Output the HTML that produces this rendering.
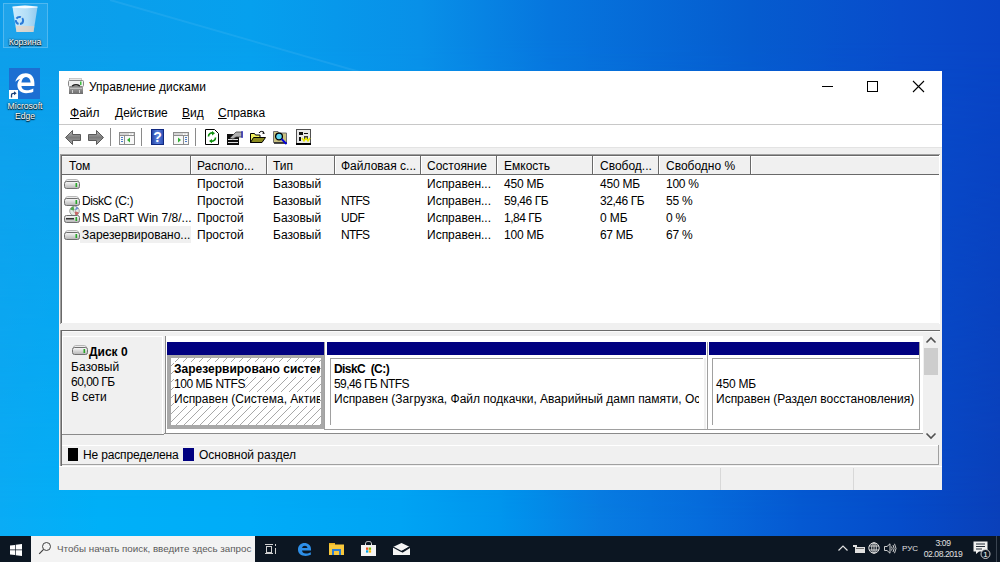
<!DOCTYPE html>
<html><head><meta charset="utf-8">
<style>
*{box-sizing:border-box;margin:0;padding:0}
html,body{width:1000px;height:562px;overflow:hidden}
body{position:relative;font-family:"Liberation Sans",sans-serif;font-size:12px;color:#000;
background:linear-gradient(90deg,#0aacf5 0px,#00b0f8 100px,#00acf8 250px,#00a4f4 400px,#0096ee 500px,#087ce2 600px,#066cdc 700px,#0559d2 800px,#054cca 900px,#0a40ba 1000px)}
#bgtop{position:absolute;left:0;top:0;width:1000px;height:562px;background:linear-gradient(90deg,#0e9eea 0px,#06a0ee 250px,#0890e8 420px,#0676de 550px,#055ccf 750px,#084ccb 900px,#0844c6 1000px);-webkit-mask-image:linear-gradient(to bottom,#000 0px,#000 40px,transparent 520px);mask-image:linear-gradient(to bottom,#000 0px,#000 40px,transparent 520px)}
.a{position:absolute}
.t{position:absolute;white-space:nowrap;line-height:15px;font-size:12px;height:15px}
.b{font-weight:bold}
svg{position:absolute;overflow:visible}
</style></head><body>

<div id="bgtop"></div>
<svg style="left:0;top:0" width="1000" height="72"><path d="M110 0L360 72" stroke="rgba(255,255,255,0.07)" stroke-width="2"/></svg>
<div class="a" style="left:3px;top:3px;width:45px;height:45px;background:rgba(255,255,255,0.07);border:1px solid rgba(255,255,255,0.22)"></div>
<div class="a" style="left:59px;top:71px;width:883px;height:419px;background:#fff;"></div>
<div class="t " style="left:89px;top:80px;">Управление дисками</div>
<div class="a" style="left:822px;top:86px;width:11px;height:1px;background:#000;"></div>
<div class="a" style="left:867px;top:81px;width:11px;height:11px;background:transparent;border:1px solid #000"></div>
<svg style="left:913px;top:81px" width="11" height="11"><path d="M0 0L11 11M11 0L0 11" stroke="#000" stroke-width="1.1"/></svg>
<div class="t " style="left:70px;top:106px;"><u>Ф</u>айл</div>
<div class="t " style="left:115px;top:106px;"><u>Д</u>ействие</div>
<div class="t " style="left:182px;top:106px;"><u>В</u>ид</div>
<div class="t " style="left:218px;top:106px;"><u>С</u>правка</div>
<div class="a" style="left:59px;top:124px;width:883px;height:1px;background:#c8c8c8;"></div>
<div class="a" style="left:59px;top:147px;width:883px;height:343px;background:#f0f0f0;"></div>
<div class="a" style="left:60px;top:154px;width:880px;height:170px;background:#fff;"></div>
<div class="a" style="left:60px;top:154px;width:880px;height:1px;background:#a0a0a0;"></div>
<div class="a" style="left:60px;top:154px;width:1px;height:170px;background:#a0a0a0;"></div>
<div class="a" style="left:61px;top:155px;width:878px;height:1px;background:#696969;"></div>
<div class="a" style="left:61px;top:155px;width:1px;height:168px;background:#696969;"></div>
<div class="a" style="left:62px;top:156px;width:877px;height:18px;background:#f0f0f0;"></div>
<div class="a" style="left:62px;top:156px;width:877px;height:1px;background:#fff;"></div>
<div class="a" style="left:62px;top:174px;width:877px;height:1px;background:#696969;"></div>
<div class="a" style="left:190px;top:156px;width:1px;height:18px;background:#696969;"></div>
<div class="a" style="left:191px;top:157px;width:1px;height:17px;background:#fff;"></div>
<div class="a" style="left:266px;top:156px;width:1px;height:18px;background:#696969;"></div>
<div class="a" style="left:267px;top:157px;width:1px;height:17px;background:#fff;"></div>
<div class="a" style="left:334px;top:156px;width:1px;height:18px;background:#696969;"></div>
<div class="a" style="left:335px;top:157px;width:1px;height:17px;background:#fff;"></div>
<div class="a" style="left:420px;top:156px;width:1px;height:18px;background:#696969;"></div>
<div class="a" style="left:421px;top:157px;width:1px;height:17px;background:#fff;"></div>
<div class="a" style="left:496px;top:156px;width:1px;height:18px;background:#696969;"></div>
<div class="a" style="left:497px;top:157px;width:1px;height:17px;background:#fff;"></div>
<div class="a" style="left:592px;top:156px;width:1px;height:18px;background:#696969;"></div>
<div class="a" style="left:593px;top:157px;width:1px;height:17px;background:#fff;"></div>
<div class="a" style="left:658px;top:156px;width:1px;height:18px;background:#696969;"></div>
<div class="a" style="left:659px;top:157px;width:1px;height:17px;background:#fff;"></div>
<div class="a" style="left:750px;top:156px;width:1px;height:18px;background:#696969;"></div>
<div class="a" style="left:751px;top:157px;width:1px;height:17px;background:#fff;"></div>
<div class="t " style="left:69px;top:159px;">Том</div>
<div class="t " style="left:197px;top:159px;">Располо...</div>
<div class="t " style="left:273px;top:159px;">Тип</div>
<div class="t " style="left:341px;top:159px;">Файловая с...</div>
<div class="t " style="left:427px;top:159px;">Состояние</div>
<div class="t " style="left:504px;top:159px;">Емкость</div>
<div class="t " style="left:600px;top:159px;">Свобод...</div>
<div class="t " style="left:666px;top:159px;">Свободно %</div>
<div class="t " style="left:197px;top:177px;">Простой</div>
<div class="t " style="left:273px;top:177px;">Базовый</div>
<div class="t " style="left:427px;top:177px;">Исправен...</div>
<div class="t " style="left:504px;top:177px;letter-spacing:-0.2px;">450 МБ</div>
<div class="t " style="left:600px;top:177px;letter-spacing:-0.2px;">450 МБ</div>
<div class="t " style="left:666px;top:177px;letter-spacing:-0.25px;">100 %</div>
<svg style="left:64px;top:179px" width="16" height="10"><defs><linearGradient id="gd64179" x1="0" y1="0" x2="0" y2="1"><stop offset="0" stop-color="#fafafa"/><stop offset="1" stop-color="#b4b4b4"/></linearGradient></defs><path d="M3.5 0.5H12.5Q14 0.5 14.8 2.8H1.2Q2 0.5 3.5 0.5Z" fill="#ececec" stroke="#a8a8a8" stroke-width="0.8"/><rect x="0.5" y="2.5" width="15" height="7" rx="2" fill="url(#gd64179)" stroke="#707070"/><rect x="11.5" y="4" width="1.6" height="4" fill="#28a828"/></svg>
<div class="t " style="left:82px;top:194px;letter-spacing:-0.43px;">DiskC (C:)</div>
<div class="t " style="left:197px;top:194px;">Простой</div>
<div class="t " style="left:273px;top:194px;">Базовый</div>
<div class="t " style="left:341px;top:194px;letter-spacing:-0.75px;">NTFS</div>
<div class="t " style="left:427px;top:194px;">Исправен...</div>
<div class="t " style="left:504px;top:194px;letter-spacing:-0.45px;">59,46 ГБ</div>
<div class="t " style="left:600px;top:194px;letter-spacing:-0.45px;">32,46 ГБ</div>
<div class="t " style="left:666px;top:194px;letter-spacing:-0.25px;">55 %</div>
<svg style="left:64px;top:196px" width="16" height="10"><defs><linearGradient id="gd64196" x1="0" y1="0" x2="0" y2="1"><stop offset="0" stop-color="#fafafa"/><stop offset="1" stop-color="#b4b4b4"/></linearGradient></defs><path d="M3.5 0.5H12.5Q14 0.5 14.8 2.8H1.2Q2 0.5 3.5 0.5Z" fill="#ececec" stroke="#a8a8a8" stroke-width="0.8"/><rect x="0.5" y="2.5" width="15" height="7" rx="2" fill="url(#gd64196)" stroke="#707070"/><rect x="11.5" y="4" width="1.6" height="4" fill="#28a828"/></svg>
<div class="t " style="left:82px;top:211px;">MS DaRT Win 7/8/...</div>
<div class="t " style="left:197px;top:211px;">Простой</div>
<div class="t " style="left:273px;top:211px;">Базовый</div>
<div class="t " style="left:341px;top:211px;letter-spacing:-0.45px;">UDF</div>
<div class="t " style="left:427px;top:211px;">Исправен...</div>
<div class="t " style="left:504px;top:211px;letter-spacing:-0.5px;">1,84 ГБ</div>
<div class="t " style="left:600px;top:211px;letter-spacing:-0.1px;">0 МБ</div>
<div class="t " style="left:666px;top:211px;letter-spacing:-0.2px;">0 %</div>
<svg style="left:64px;top:206px" width="16" height="17"><defs><linearGradient id="gd64213" x1="0" y1="0" x2="0" y2="1"><stop offset="0" stop-color="#fafafa"/><stop offset="1" stop-color="#b4b4b4"/></linearGradient></defs><circle cx="10.5" cy="5" r="4.8" fill="#e4ece4" stroke="#909090" stroke-width="0.8"/><path d="M6.2 3.5A4.8 4.8 0 0 1 9.5 0.3L10.5 5Z" fill="#50a850"/><path d="M14.8 6.5A4.8 4.8 0 0 1 11.5 9.7L10.5 5Z" fill="#c86868"/><path d="M14.5 2.5A4.8 4.8 0 0 0 12.5 0.6L10.5 5Z" fill="#7090d0"/><circle cx="10.5" cy="5" r="1.1" fill="#fff" stroke="#888" stroke-width="0.5"/><rect x="0.5" y="9.5" width="15" height="7" rx="2" fill="url(#gd64213)" stroke="#707070"/><rect x="2" y="12" width="8" height="1.5" fill="#303030"/><rect x="11.5" y="11" width="1.6" height="4" fill="#28a828"/></svg>
<div class="a" style="left:80px;top:226px;width:111px;height:17px;background:#f0f0f0;"></div>
<div class="t " style="left:82px;top:228px;">Зарезервировано...</div>
<div class="t " style="left:197px;top:228px;">Простой</div>
<div class="t " style="left:273px;top:228px;">Базовый</div>
<div class="t " style="left:341px;top:228px;letter-spacing:-0.75px;">NTFS</div>
<div class="t " style="left:427px;top:228px;">Исправен...</div>
<div class="t " style="left:504px;top:228px;letter-spacing:-0.2px;">100 МБ</div>
<div class="t " style="left:600px;top:228px;letter-spacing:-0.3px;">67 МБ</div>
<div class="t " style="left:666px;top:228px;letter-spacing:-0.25px;">67 %</div>
<svg style="left:64px;top:230px" width="16" height="10"><defs><linearGradient id="gd64230" x1="0" y1="0" x2="0" y2="1"><stop offset="0" stop-color="#fafafa"/><stop offset="1" stop-color="#b4b4b4"/></linearGradient></defs><path d="M3.5 0.5H12.5Q14 0.5 14.8 2.8H1.2Q2 0.5 3.5 0.5Z" fill="#ececec" stroke="#a8a8a8" stroke-width="0.8"/><rect x="0.5" y="2.5" width="15" height="7" rx="2" fill="url(#gd64230)" stroke="#707070"/><rect x="11.5" y="4" width="1.6" height="4" fill="#28a828"/></svg>
<div class="a" style="left:61px;top:323px;width:878px;height:1px;background:#f0f0f0;"></div>
<div class="a" style="left:60px;top:330px;width:880px;height:1px;background:#6a6a6a;"></div>
<div class="a" style="left:60px;top:331px;width:880px;height:1px;background:#fafafa;"></div>
<div class="a" style="left:60px;top:330px;width:1px;height:136px;background:#a0a0a0;"></div>
<div class="a" style="left:61px;top:330px;width:1px;height:136px;background:#696969;"></div>
<div class="a" style="left:62px;top:336px;width:101px;height:99px;background:#f0f0f0;"></div>
<div class="a" style="left:62px;top:336px;width:101px;height:1px;background:#fff;"></div>
<div class="a" style="left:62px;top:336px;width:1px;height:98px;background:#fff;"></div>
<div class="a" style="left:162px;top:336px;width:1px;height:98px;background:#fff;"></div>
<div class="a" style="left:62px;top:434px;width:102px;height:1px;background:#8a8a8a;"></div>
<div class="t b" style="left:89px;top:345px;">Диск 0</div>
<div class="t " style="left:71px;top:360px;">Базовый</div>
<div class="t " style="left:71px;top:375px;letter-spacing:-0.5px;">60,00 ГБ</div>
<div class="t " style="left:71px;top:390px;">В сети</div>
<svg style="left:72px;top:345px" width="16" height="10"><defs><linearGradient id="gd72345" x1="0" y1="0" x2="0" y2="1"><stop offset="0" stop-color="#fafafa"/><stop offset="1" stop-color="#b4b4b4"/></linearGradient></defs><path d="M3.5 0.5H12.5Q14 0.5 14.8 2.8H1.2Q2 0.5 3.5 0.5Z" fill="#ececec" stroke="#a8a8a8" stroke-width="0.8"/><rect x="0.5" y="2.5" width="15" height="7" rx="2" fill="url(#gd72345)" stroke="#707070"/><rect x="11.5" y="4" width="1.6" height="4" fill="#28a828"/></svg>
<div class="a" style="left:166px;top:336px;width:757px;height:98px;background:#fff;"></div>
<div class="a" style="left:164px;top:433px;width:759px;height:1px;background:#8a8a8a;"></div>
<div class="a" style="left:165px;top:336px;width:1px;height:97px;background:#8a8a8a;"></div>
<div class="a" style="left:167px;top:342px;width:157px;height:13px;background:#000080;"></div>
<div class="a" style="left:327px;top:342px;width:379px;height:13px;background:#000080;"></div>
<div class="a" style="left:709px;top:342px;width:210px;height:13px;background:#000080;"></div>
<div class="a" style="left:324px;top:342px;width:1px;height:88px;background:#a0a0a0;"></div>
<div class="a" style="left:707px;top:342px;width:1px;height:88px;background:#a0a0a0;"></div>
<div class="a" style="left:704px;top:358px;width:2px;height:71px;background:#f0f0f0;"></div>
<div class="a" style="left:919px;top:342px;width:1px;height:88px;background:#a0a0a0;"></div>
<div class="a" style="left:325px;top:429px;width:595px;height:1px;background:#a0a0a0;"></div>
<div class="a" style="left:167px;top:355px;width:157px;height:74px;background:#a8a8a8;"></div>
<svg style="left:171px;top:358px" width="150" height="67"><defs><pattern id="h" width="8" height="8" patternUnits="userSpaceOnUse"><rect width="8" height="8" fill="#fff"/><path d="M-1 9L9 -1" stroke="#a8a8a8" stroke-width="1"/></pattern></defs><rect width="150" height="67" fill="url(#h)"/></svg>
<div class="t b" style="left:174px;top:362px;width:146px;overflow:hidden;background:#fff">Зарезервировано систем</div>
<div class="t " style="left:174px;top:377px;letter-spacing:-0.45px;background:#fff">100 МБ NTFS</div>
<div class="t " style="left:174px;top:392px;width:146px;overflow:hidden;background:#fff;height:14px">Исправен (Система, Активен, Основной раздел)</div>
<div class="a" style="left:330px;top:358px;width:373px;height:67px;background:#fff;border-top:1px solid #a0a0a0;border-left:1px solid #a0a0a0"></div>
<div class="t b" style="left:334px;top:362px;letter-spacing:-0.57px;">DiskC&nbsp;&nbsp;(C:)</div>
<div class="t " style="left:334px;top:377px;letter-spacing:-0.57px;">59,46 ГБ NTFS</div>
<div class="t " style="left:334px;top:392px;width:365px;overflow:hidden">Исправен (Загрузка, Файл подкачки, Аварийный дамп памяти, Основной раздел)</div>
<div class="a" style="left:712px;top:358px;width:207px;height:67px;background:#fff;border-top:1px solid #a0a0a0;border-left:1px solid #a0a0a0"></div>
<div class="t " style="left:716px;top:377px;letter-spacing:-0.2px;">450 МБ</div>
<div class="t " style="left:716px;top:392px;">Исправен (Раздел восстановления)</div>
<div class="a" style="left:923px;top:337px;width:16px;height:108px;background:#f0f0f0;"></div>
<div class="a" style="left:924px;top:348px;width:14px;height:27px;background:#cdcdcd;"></div>
<svg style="left:925px;top:336px" width="12" height="8"><path d="M1.5 6.5L6 2L10.5 6.5" stroke="#505050" stroke-width="1.6" fill="none"/></svg>
<svg style="left:925px;top:432px" width="12" height="8"><path d="M1.5 1.5L6 6L10.5 1.5" stroke="#505050" stroke-width="1.6" fill="none"/></svg>
<div class="a" style="left:62px;top:445px;width:877px;height:1px;background:#fff;"></div>
<div class="a" style="left:62px;top:464px;width:877px;height:1px;background:#a0a0a0;"></div>
<div class="a" style="left:938px;top:445px;width:1px;height:20px;background:#a0a0a0;"></div>
<div class="a" style="left:68px;top:448px;width:10px;height:13px;background:#000;"></div>
<div class="t " style="left:83px;top:448px;letter-spacing:-0.15px">Не распределена</div>
<div class="a" style="left:183px;top:448px;width:11px;height:13px;background:#000080;"></div>
<div class="t " style="left:199px;top:448px;">Основной раздел</div>
<div class="a" style="left:59px;top:466px;width:883px;height:1px;background:#fff;"></div>
<div class="a" style="left:720px;top:468px;width:1px;height:22px;background:#d8d8d8;"></div>
<div class="a" style="left:853px;top:468px;width:1px;height:22px;background:#d8d8d8;"></div>
<svg style="left:64px;top:129px" width="18" height="17"><defs><linearGradient id="ga" x1="0" y1="0" x2="0" y2="1"><stop offset="0" stop-color="#b8b8b8"/><stop offset="0.5" stop-color="#7c7c7c"/><stop offset="1" stop-color="#a8a8a8"/></linearGradient></defs><path d="M1.5 8.5L8.5 1.5V5.5H16.5V11.5H8.5V15.5Z" fill="url(#ga)" stroke="#5a5a5a" stroke-width="1" stroke-linejoin="round"/></svg>
<svg style="left:87px;top:129px" width="18" height="17"><path d="M16.5 8.5L9.5 1.5V5.5H1.5V11.5H9.5V15.5Z" fill="url(#ga)" stroke="#5a5a5a" stroke-width="1" stroke-linejoin="round"/></svg>
<div class="a" style="left:110px;top:128px;width:1px;height:18px;background:#8a8a8a;"></div>
<div class="a" style="left:141px;top:128px;width:1px;height:18px;background:#8a8a8a;"></div>
<div class="a" style="left:195px;top:128px;width:1px;height:18px;background:#8a8a8a;"></div>
<svg style="left:119px;top:132px" width="16" height="13"><rect x="0.5" y="0.5" width="15" height="12" fill="#f8f8f8" stroke="#8c8c8c"/><rect x="1" y="1" width="14" height="2.5" fill="#d4d4d4"/><rect x="10" y="1.5" width="1.5" height="1.5" fill="#fff"/><rect x="12.5" y="1.5" width="1.5" height="1.5" fill="#fff"/><path d="M0.5 3.5H15.5M5.5 3.5V12.5" stroke="#8c8c8c"/><path d="M2 5.5H4M2 7.5H4M2 9.5H4" stroke="#4a7cc8"/><path d="M11 5.5V10.5L8 8Z" fill="#30b030"/></svg>
<svg style="left:151px;top:129px" width="13" height="16"><defs><linearGradient id="gh" x1="0" y1="0" x2="1" y2="0"><stop offset="0" stop-color="#1e3ca0"/><stop offset="0.5" stop-color="#5a82dc"/><stop offset="1" stop-color="#2848b0"/></linearGradient></defs><rect x="0" y="0" width="13" height="16" fill="url(#gh)"/><rect x="0.5" y="0.5" width="12" height="15" fill="none" stroke="#102880"/><text x="6.5" y="13" font-family="Liberation Sans" font-weight="bold" font-size="14" fill="#fff" text-anchor="middle">?</text></svg>
<svg style="left:173px;top:132px" width="16" height="13"><rect x="0.5" y="0.5" width="15" height="12" fill="#f8f8f8" stroke="#8c8c8c"/><rect x="1" y="1" width="14" height="2.5" fill="#d4d4d4"/><rect x="10" y="1.5" width="1.5" height="1.5" fill="#fff"/><rect x="12.5" y="1.5" width="1.5" height="1.5" fill="#fff"/><path d="M0.5 3.5H15.5M10.5 3.5V12.5" stroke="#8c8c8c"/><path d="M12 5.5H14M12 7.5H14M12 9.5H14" stroke="#4a7cc8"/><path d="M5 5.5V10.5L8 8Z" fill="#30b030"/></svg>
<svg style="left:205px;top:129px" width="14" height="16"><path d="M0.5 0.5H9.5L13.5 4.5V15.5H0.5Z" fill="#fff" stroke="#000"/><path d="M3.5 7.5A3.5 3.5 0 0 1 8 4" stroke="#109010" stroke-width="1.6" fill="none"/><path d="M7 2L10 4.2L7 6.4Z" fill="#109010"/><path d="M10.5 8.5A3.5 3.5 0 0 1 6 12" stroke="#109010" stroke-width="1.6" fill="none"/><path d="M7 10L4 12L7 14.2Z" fill="#109010"/></svg>
<svg style="left:227px;top:130px" width="16" height="15"><rect x="0" y="4" width="12" height="11" fill="#101010"/><rect x="1" y="9" width="10" height="1" fill="#e0e0e0"/><rect x="1" y="12" width="10" height="1" fill="#e0e0e0"/><path d="M3 8L9 2H15V7H9L6 9Z" fill="#b0b0b0" stroke="#404040" stroke-width="0.8"/><rect x="14.5" y="1" width="1.2" height="7" fill="#2020c0"/></svg>
<svg style="left:250px;top:130px" width="16" height="13"><path d="M0.5 3.5H4.5L5.5 5H10V12.5H0.5Z" fill="#f0f060" stroke="#000"/><path d="M0.5 12.5L3.5 7.5H15.5L12 12.5Z" fill="#8c8c20" stroke="#000"/><path d="M9 3A3 3 0 0 1 14 2.5" stroke="#000" stroke-width="1" fill="none"/><path d="M13 1.5L15 3.5L12.5 4Z" fill="#000"/></svg>
<svg style="left:273px;top:130px" width="16" height="15"><path d="M0.5 1.5H5L6 3H13.5V12.5H0.5Z" fill="#c8c080" stroke="#707070"/><rect x="1" y="12.5" width="13" height="1.2" fill="#000"/><circle cx="6" cy="6.5" r="3.4" fill="#60d8f0" stroke="#000" stroke-width="1.3"/><path d="M8.5 9L13.5 14" stroke="#0000e0" stroke-width="1.8"/></svg>
<svg style="left:296px;top:129px" width="16" height="16" shape-rendering="crispEdges"><rect x="0.5" y="0.5" width="14" height="14" fill="#e8e8e8" stroke="#505050"/><rect x="0" y="14" width="15" height="1.5" fill="#000"/><rect x="3" y="3" width="4" height="3" fill="#101010"/><rect x="8" y="4" width="4" height="1" fill="#101010"/><rect x="3" y="8" width="2" height="4" fill="#101010"/><rect x="8" y="7" width="4" height="4" fill="#404040"/><path d="M6 9L8 12L10 9L12 12L14 9" stroke="#e8e800" stroke-width="1.4" fill="none" shape-rendering="auto"/></svg>
<div class="a" style="left:59px;top:147px;width:883px;height:1px;background:#e3e3e3;"></div>
<svg style="left:68px;top:78px" width="16" height="16"><defs><linearGradient id="gt" x1="0" y1="0" x2="0" y2="1"><stop offset="0" stop-color="#a0a0a0"/><stop offset="1" stop-color="#6c6c6c"/></linearGradient></defs><rect x="1.5" y="0.5" width="12" height="2" fill="#e8e8e8" stroke="#b0b0b0" stroke-width="0.6"/><rect x="0.5" y="2.5" width="15" height="6" rx="1" fill="#f0f0f0" stroke="#888"/><path d="M4 8Q8 5.5 12 8" stroke="#202020" stroke-width="1.3" fill="none"/><rect x="12" y="3.5" width="1.5" height="3.5" fill="#40c040"/><rect x="1" y="9" width="14" height="7" fill="url(#gt)"/><rect x="2" y="10" width="12" height="1" fill="#c0c0c0"/><rect x="4" y="12" width="1" height="3" fill="#d0d0d0"/><rect x="11" y="12" width="1" height="3" fill="#d0d0d0"/></svg>
<svg style="left:11px;top:5px" width="28" height="28"><defs><linearGradient id="gb" x1="0" y1="0" x2="1" y2="0"><stop offset="0" stop-color="rgba(235,248,255,0.85)"/><stop offset="0.6" stop-color="rgba(215,236,250,0.8)"/><stop offset="1" stop-color="rgba(185,215,240,0.75)"/></linearGradient></defs><path d="M1.5 2L26.5 2L22.5 27H5.5Z" fill="url(#gb)"/><path d="M1.5 2Q14 -0.5 26.5 2Q14 4 1.5 2Z" fill="#f4fbff" stroke="rgba(255,255,255,0.9)" stroke-width="0.6"/><path d="M4.6 21H23.4L22.5 27H5.5Z" fill="rgba(245,205,175,0.55)"/><circle cx="8.5" cy="15.5" r="3.6" fill="none" stroke="#2a7ad8" stroke-width="2" stroke-dasharray="5 1.5"/></svg>
<div class="a" style="left:0;top:37px;width:50px;text-align:center;font-size:8.6px;line-height:10px;color:#fff;text-shadow:0 0 2px #000,0 1px 1px #000">Корзина</div>
<div class="a" style="left:9px;top:68px;width:31px;height:31px;background:#1c6fd2;"></div>
<svg style="left:9px;top:68px" width="31" height="31"><path d="M6.3 13.8C8 8.5 11.5 5.3 16.8 5.3C22.3 5.3 25.4 9.5 25.4 15V17.9H12.4C12.7 21 14.7 22.2 17.7 22.2C20.2 22.2 22.4 21.6 24.3 20.4V23.8C22.4 24.8 19.9 25.2 17.1 25.2C11.6 25.2 8.4 21.6 8.4 17.1C8.4 14.6 9.5 12.4 11.2 10.9C9.2 11.4 7.6 12.4 6.3 13.8Z M12.4 14.5H21.6C21.4 11 19.6 8.9 17 8.9C14.6 8.9 12.9 11 12.4 14.5Z" fill="#fff" fill-rule="evenodd"/></svg>
<div class="a" style="left:9px;top:90px;width:9px;height:9px;background:#fff;"></div>
<svg style="left:9px;top:90px" width="9" height="9"><path d="M2.5 7.5V5.2C2.5 4 3.3 3.3 4.5 3.3H5.5" stroke="#1a3f7a" stroke-width="1.3" fill="none"/><path d="M5 1.3L7.6 3.3L5 5.3Z" fill="#1a3f7a"/></svg>
<div class="a" style="left:0;top:102px;width:50px;text-align:center;font-size:8.6px;line-height:9.5px;color:#fff;text-shadow:0 0 2px #000,0 1px 1px #000">Microsoft<br>Edge</div>
<div class="a" style="left:0px;top:536px;width:1000px;height:26px;background:#0c1622;"></div>
<div class="a" style="left:31px;top:536px;width:224px;height:26px;background:#f3f3f3;"></div>
<svg style="left:10px;top:544px" width="12" height="12"><path d="M0 1.6L5 0.9V5.6H0Z M5.7 0.8L12 0V5.6H5.7Z M0 6.3H5V11.1L0 10.4Z M5.7 6.3H12V12L5.7 11.2Z" fill="#fff"/></svg>
<svg style="left:38px;top:541px" width="14" height="14"><circle cx="8.5" cy="5.5" r="4" fill="none" stroke="#404040" stroke-width="1"/><path d="M5.6 8.4L1.2 12.8" stroke="#404040" stroke-width="1.2"/></svg>
<div class="a" style="left:57px;top:542px;font-size:9.8px;line-height:13px;color:#5a5a5a;white-space:nowrap">Чтобы начать поиск, введите здесь запрос</div>
<svg style="left:265px;top:544px" width="12" height="11" shape-rendering="crispEdges"><rect x="0" y="0" width="8" height="1" fill="#d0d0d0"/><rect x="0" y="9" width="8" height="1" fill="#d0d0d0"/><rect x="1.5" y="2" width="5" height="6" fill="none" stroke="#d0d0d0"/><rect x="10" y="0" width="1" height="2" fill="#d0d0d0"/><rect x="10" y="4" width="1" height="6" fill="#d0d0d0"/></svg>
<svg style="left:297px;top:542px" width="15" height="14"><path d="M1 7.5C1 3.5 4 1 7.5 1C11 1 14 3.5 14 7V8.5H5C5.2 10.5 6.7 11.5 9 11.5C10.8 11.5 12.3 11 13.8 10.2V12.8C12.4 13.5 10.7 13.9 8.7 13.9C4 13.9 1 11.5 1 7.5Z M5.1 6H10.5C10.3 4.6 9.3 3.8 7.9 3.8C6.5 3.8 5.4 4.6 5.1 6Z" fill="#2d8fe8" fill-rule="evenodd"/></svg>
<svg style="left:329px;top:543px" width="15" height="12"><rect x="0" y="0" width="6" height="2" fill="#e8b020"/><rect x="0" y="1.5" width="15" height="10.5" fill="#f8c83c"/><rect x="3" y="6" width="9" height="6" fill="#2b7cd3"/><rect x="5" y="8" width="5" height="4" fill="#f8c83c"/></svg>
<svg style="left:361px;top:541px" width="15" height="15"><path d="M4.5 4V2.5C4.5 1 6 0.5 7.5 0.5C9 0.5 10.5 1 10.5 2.5V4" stroke="#e8e8e8" stroke-width="1" fill="none"/><rect x="0" y="4" width="15" height="11" fill="#f4f4f4"/><rect x="5" y="6.5" width="2.3" height="2.3" fill="#f25022"/><rect x="7.8" y="6.5" width="2.3" height="2.3" fill="#7fba00"/><rect x="5" y="9.3" width="2.3" height="2.3" fill="#00a4ef"/><rect x="7.8" y="9.3" width="2.3" height="2.3" fill="#ffb900"/></svg>
<svg style="left:393px;top:543px" width="17" height="12"><path d="M0 4L8.5 0L17 4V12H0Z" fill="#f4f4f4"/><path d="M0 4L8.5 8.5L17 4" stroke="#0c1622" stroke-width="1.2" fill="none"/><path d="M17 4L9 9" stroke="#0c1622" stroke-width="1.6"/></svg>
<svg style="left:838px;top:545px" width="10" height="6"><path d="M0.5 5.5L5 1L9.5 5.5" stroke="#e0e0e0" stroke-width="1.2" fill="none"/></svg>
<svg style="left:853px;top:545px" width="12" height="8" shape-rendering="crispEdges"><rect x="0" y="0" width="4" height="2" fill="#e0e0e0"/><rect x="2" y="2" width="10" height="6" fill="#e0e0e0"/><rect x="3" y="3" width="8" height="1" fill="#707070"/></svg>
<svg style="left:868px;top:542px" width="12" height="12"><circle cx="6" cy="6" r="5.2" fill="none" stroke="#e0e0e0" stroke-width="1"/><ellipse cx="6" cy="6" rx="2.3" ry="5.2" fill="none" stroke="#e0e0e0" stroke-width="0.9"/><path d="M1 4H11M1 8H11M6 0.8V11.2" stroke="#e0e0e0" stroke-width="0.9"/></svg>
<svg style="left:884px;top:543px" width="12" height="11"><path d="M0.5 3.5H3L6 0.8V10.2L3 7.5H0.5Z" fill="none" stroke="#e0e0e0" stroke-width="0.9"/><path d="M7.5 3.5Q8.8 5.5 7.5 7.5M9 2Q11.3 5.5 9 9M10.5 0.8Q13.5 5.5 10.5 10.2" stroke="#e0e0e0" stroke-width="0.9" fill="none"/></svg>
<div class="a" style="left:902px;top:544px;font-size:8px;line-height:10px;color:#e0e0e0;white-space:nowrap">РУС</div>
<div class="a" style="left:915px;top:538px;width:56px;text-align:center;font-size:8.6px;line-height:11px;color:#e0e0e0;white-space:nowrap;letter-spacing:-0.45px">3:09<br>02.08.2019</div>
<svg style="left:973px;top:541px" width="18" height="18"><path d="M0.5 0.5H14.5V10.5H6L3 13V10.5H0.5Z" fill="#f0f0f0"/><path d="M3 3H12M3 5.5H12M3 8H9" stroke="#0c1622" stroke-width="0.9"/><circle cx="12.5" cy="13" r="4.5" fill="#0c1622" stroke="#e0e0e0" stroke-width="0.9"/><text x="12.5" y="16" font-family="Liberation Sans" font-size="8" fill="#fff" text-anchor="middle">1</text></svg>
<div class="a" style="left:996px;top:536px;width:1px;height:26px;background:#3a4450;"></div>
</body></html>
